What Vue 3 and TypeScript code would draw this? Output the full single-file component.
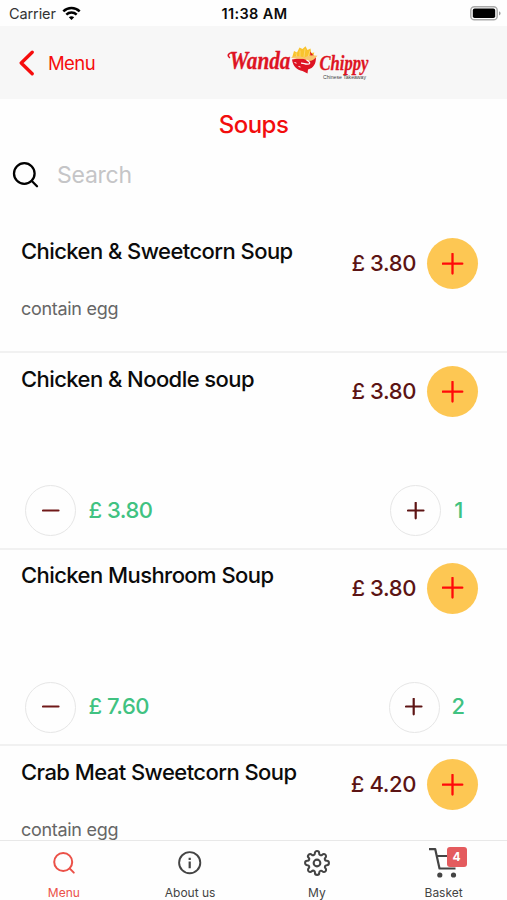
<script setup lang="ts">
interface Soup {
  name: string
  price: number
  note?: string
  quantity: number
}

const soups: Soup[] = [
  { name: 'Chicken & Sweetcorn Soup', price: 3.8, note: 'contain egg', quantity: 0 },
  { name: 'Chicken & Noodle soup', price: 3.8, quantity: 1 },
  { name: 'Chicken Mushroom Soup', price: 3.8, quantity: 2 },
  { name: 'Crab Meat Sweetcorn Soup', price: 4.2, note: 'contain egg', quantity: 0 },
]

const pounds = (value: number): string => `£ ${value.toFixed(2)}`
</script>

<template>
  <div class="screen">
    <div class="status">
      <div class="carrier">
        <span>Carrier</span>
        <svg width="19" height="15" viewBox="0 0 19 15" fill="none" stroke="#000" stroke-width="2.5">
          <path d="M1.3 5.4C6 .9 13 .9 17.7 5.4" />
          <path d="M4.3 8.6C7.3 5.8 11.7 5.8 14.7 8.6" />
          <path d="M6.8 11.2C8.4 9.8 10.6 9.8 12.2 11.2L9.5 13.9Z" fill="#000" stroke="none" />
        </svg>
      </div>
      <span class="clock">11:38 AM</span>
      <svg class="battery" width="32" height="15" viewBox="0 0 32 15">
        <rect x=".8" y=".8" width="26.4" height="13" rx="3.6" fill="#fff" stroke="#aaa" stroke-width="1.5" />
        <rect x="2.8" y="2.6" width="22.4" height="9.4" rx="1.8" fill="#000" />
        <path d="M29 5.2c2.2 1 2.2 3.2 0 4.2z" fill="#999" />
      </svg>
    </div>

    <header class="header">
      <button class="back">
        <svg width="16" height="26" viewBox="0 0 16 26" fill="none" stroke="#f60d0d" stroke-width="3.3" stroke-linecap="round" stroke-linejoin="round">
          <path d="M13.2 2.2 2.2 13l11 10.8" />
        </svg>
        <span>Menu</span>
      </button>
      <svg class="logo" width="156" height="46" viewBox="0 -4 156 46">
        <g fill="#de1423" stroke="#de1423" stroke-width=".3" font-family="'Liberation Serif', serif" font-style="italic" font-weight="700">
          <text x="3.500" y="22.800" font-size="25" textLength="61" lengthAdjust="spacingAndGlyphs">Wanda</text>
          <text x="93.500" y="23.800" font-size="21" textLength="49" lengthAdjust="spacingAndGlyphs">Chippy</text>
        </g>
        <path d="M3.500 11.500C1 9.500 2.500 6.300 7.500 6.800" fill="none" stroke="#de1423" stroke-width="1.500" stroke-linecap="round" />
        <path d="M66 12 68 5l3 1.500L73.500 1.500l3 1.500L79.500.300l2 3.700 3-1.500.8 4.500 3-.5-2 7.500z" fill="#f9c32d" />
        <path d="m71 12-1-5m4 4V4.500m4 6.500 1-8m3 8 2-6" fill="none" stroke="#fff" stroke-width=".6" opacity=".5" />
        <path d="M84 5.500 88 10l-3 4z" fill="#de1423" />
        <path d="M66 13.500c6-2 17 1 24-2.500 0 7-2.500 11-8 12.500l-.5 4-5-2.500c-5.500-.8-9.500-4.500-10.500-11.500z" fill="#de1423" />
        <path d="M64.500 11.800c6-2.500 10-1.500 14-.3 4-1.700 7-3 13-1.700-3 4-6 5.500-9.500 5.200-2.500-1.700-4.500-2.200-7-2.200z" fill="#f9c56f" />
        <path d="M80.500 14c5 2.700 3.500 4.200.5 4.200-2.500-.2-3.500-1.200-6-1" fill="none" stroke="#fff" stroke-width="1.200" />
        <path d="m68.500 16.500 2 .7m2 3.300 2 .5" stroke="#fff" stroke-width="1" />
        <text x="97" y="32.500" font-size="5.500" fill="#444" font-family="'Liberation Sans', sans-serif" textLength="43" lengthAdjust="spacingAndGlyphs">Chinese Takeaway</text>
      </svg>
    </header>

    <h1 class="title">Soups</h1>
    <label class="search">
      <svg width="27" height="27" viewBox="0 0 27 27" fill="none" stroke="#000" stroke-width="2.300" stroke-linecap="round">
        <circle cx="12.300" cy="12.500" r="10.300" />
        <path d="m19.800 20 5.200 5.200" />
      </svg>
      <span>Search</span>
    </label>

    <main class="list">
      <section v-for="soup in soups" :key="soup.name" class="item" :class="{ ordered: soup.quantity > 0 }">
        <div class="summary">
          <div class="details">
            <h2>{{ soup.name }}</h2>
            <p v-if="soup.note">{{ soup.note }}</p>
          </div>
          <span class="price">{{ pounds(soup.price) }}</span>
          <button class="add">
            <svg width="22" height="22" viewBox="0 0 22 22" stroke="#ff0a0a" stroke-width="2.300" stroke-linecap="round">
              <path d="M.700 10.700h19.600M10.500.900v19.600" />
            </svg>
          </button>
        </div>
        <div v-if="soup.quantity > 0" class="stepper">
          <button class="round">
            <svg width="18" height="18" viewBox="0 0 18 18" stroke="#701919" stroke-width="2.200" stroke-linecap="round"><path d="M1 8.500h15.500" /></svg>
          </button>
          <span class="total">{{ pounds(soup.price * soup.quantity) }}</span>
          <button class="round">
            <svg width="18" height="18" viewBox="0 0 18 18" stroke="#5e1515" stroke-width="2.200" stroke-linecap="round"><path d="M1 8.500h15.500M8.700.800v15.500" /></svg>
          </button>
          <span class="quantity">{{ soup.quantity }}</span>
        </div>
      </section>
    </main>

    <nav class="tabs">
      <button class="tab active">
        <svg width="26" height="26" viewBox="0 0 26 26" fill="none" stroke="currentColor" stroke-width="2" stroke-linecap="round">
          <circle cx="12.200" cy="12" r="9" />
          <path d="m18.600 18.400 4.200 4.200" />
        </svg>
        <span>Menu</span>
      </button>
      <button class="tab">
        <svg width="26" height="26" viewBox="0 0 26 26" fill="none" stroke="currentColor" stroke-width="1.900">
          <circle cx="12.700" cy="12.700" r="10.600" />
          <path d="M12.700 11.500v6.700M12.700 7.800v2.200" stroke-width="2.200" />
        </svg>
        <span>About us</span>
      </button>
      <button class="tab">
        <svg width="26" height="26" viewBox="0 0 24 24" fill="none" stroke="currentColor" stroke-width="1.900" stroke-linejoin="round">
          <circle cx="12" cy="12" r="3.100" />
          <path d="M19.400 15a1.650 1.650 0 0 0 .33 1.820l.06.060a2 2 0 1 1-2.830 2.830l-.060-.060a1.650 1.650 0 0 0-2.800 1.170V21a2 2 0 1 1-4 0v-.090a1.650 1.650 0 0 0-2.900-1.260l-.060.060a2 2 0 1 1-2.830-2.830l.060-.060A1.650 1.650 0 0 0 3.090 14H3a2 2 0 1 1 0-4h.090A1.650 1.650 0 0 0 4.370 7.180l-.060-.060a2 2 0 1 1 2.830-2.830l.060.060A1.650 1.650 0 0 0 10 3.090V3a2 2 0 1 1 4 0v.090a1.650 1.650 0 0 0 2.820 1.260l.060-.060a2 2 0 1 1 2.830 2.830l-.060.060A1.650 1.650 0 0 0 20.910 10H21a2 2 0 1 1 0 4h-.090a1.650 1.650 0 0 0-1.510 1z" />
        </svg>
        <span>My</span>
      </button>
      <button class="tab">
        <span class="cart">
          <svg width="30" height="32" viewBox="0 0 30 32" fill="none" stroke="currentColor" stroke-width="2.200" stroke-linejoin="round">
            <path d="M0 2.100h6.200l4.300 19.400h16M7.800 9H27l-2.500 9.500" />
            <circle cx="10.800" cy="28" r="2.600" fill="currentColor" stroke="none" />
            <circle cx="24.500" cy="28" r="2.600" fill="currentColor" stroke="none" />
          </svg>
          <b>4</b>
        </span>
        <span>Basket</span>
      </button>
    </nav>
  </div>
</template>

<style>
body {
  margin: 0;
  background: #fefefe;
}
</style>

<style scoped>
.screen {
  display: flex;
  flex-direction: column;
  width: 507px;
  height: 900px;
  overflow: hidden;
  background: #fefefe;
  color: #0b0b0b;
  font-family: Inter, Roboto, sans-serif;
}

button {
  display: flex;
  align-items: center;
  justify-content: center;
  padding: 0;
  border: 0;
  background: none;
  color: inherit;
  font: inherit;
}

svg {
  display: block;
  flex: none;
}

.status {
  display: grid;
  grid-template-columns: 1fr auto 1fr;
  align-items: center;
  flex: none;
  box-sizing: border-box;
  height: 26px;
  padding: 1px 5px 0 9px;
  font-size: 14.5px;
}

.carrier {
  display: flex;
  align-items: center;
  gap: 6px;
  color: #333;
  letter-spacing: -0.1px;
}

.clock {
  margin-right: 2px;
  font-weight: 600;
  letter-spacing: 0.35px;
}

.battery {
  justify-self: end;
}

.header {
  display: flex;
  align-items: center;
  flex: none;
  height: 73px;
  padding-left: 19px;
  background: #f7f7f7;
}

.back {
  gap: 13px;
  width: 206px;
  justify-content: flex-start;
  color: #f60d0d;
  font-size: 18.5px;
  letter-spacing: -0.6px;
}

.logo {
  margin: 5px 0 0 1px;
  overflow: visible;
}

.title {
  flex: none;
  margin: 0;
  padding-top: 10px;
  color: #f20d0d;
  font-size: 24px;
  font-weight: 500;
  letter-spacing: -0.5px;
  line-height: 32px;
  text-align: center;
}

.search {
  display: flex;
  align-items: center;
  gap: 18px;
  flex: none;
  height: 67px;
  padding-left: 12px;
  color: #c5c5c7;
  font-size: 23px;
  letter-spacing: -0.25px;
}

.list {
  flex: 1;
  min-height: 0;
  margin-top: 17px;
  overflow: hidden;
}

.item {
  box-sizing: border-box;
  height: 128px;
  padding: 13px 29px 0 21px;
  border-bottom: 2px solid #f1f1f1;
}

.item.ordered {
  height: 196.5px;
}

.summary {
  display: flex;
  align-items: flex-start;
  height: 94px;
}

.details {
  flex: 1;
  margin-top: -0.5px;
}

h2 {
  margin: 0;
  font-size: 22px;
  font-weight: 500;
  letter-spacing: -0.56px;
  line-height: 27px;
  white-space: nowrap;
}

p {
  margin: 31px 0 0;
  color: #666;
  font-size: 18px;
  letter-spacing: -0.3px;
  line-height: 26px;
}

.price {
  margin-right: 11px;
  color: #5c1414;
  font-size: 22px;
  font-weight: 500;
  letter-spacing: -0.4px;
  line-height: 51px;
}

.add,
.round {
  flex: none;
  box-sizing: border-box;
  width: 51px;
  height: 51px;
  border-radius: 50%;
}

.add {
  background: #fdc753;
}

.stepper {
  display: flex;
  align-items: center;
  padding: 25px 0 0 4px;
}

.round {
  border: 1.5px solid #e6e6e6;
}

.total,
.quantity {
  padding-bottom: 2px;
  color: #40c281;
  font-size: 22px;
  font-weight: 500;
  letter-spacing: -0.5px;
}

.total {
  flex: 1;
  margin-left: 12.5px;
}

.quantity {
  min-width: 12px;
  margin: 0 13.5px 0 11.5px;
  text-align: center;
}

.tabs {
  display: grid;
  grid-template-columns: repeat(4, 1fr);
  flex: none;
  box-sizing: border-box;
  height: 60px;
  border-top: 1px solid #e8e8e8;
  background: #fefefe;
}

.tab {
  flex-direction: column;
  justify-content: space-between;
  padding: 9px 0 0;
  color: #444;
  font-size: 12px;
  line-height: 15px;
}

.tab.active {
  padding-left: 1px;
  color: #eb5148;
}

.cart {
  position: relative;
  width: 30px;
  height: 26px;
  margin-top: -3px;
}

.cart b {
  position: absolute;
  top: 0;
  left: 18px;
  width: 20px;
  height: 20px;
  border-radius: 3px;
  background: #e45b5e;
  color: #fff;
  font-size: 12px;
  line-height: 20px;
  text-align: center;
}
</style>
